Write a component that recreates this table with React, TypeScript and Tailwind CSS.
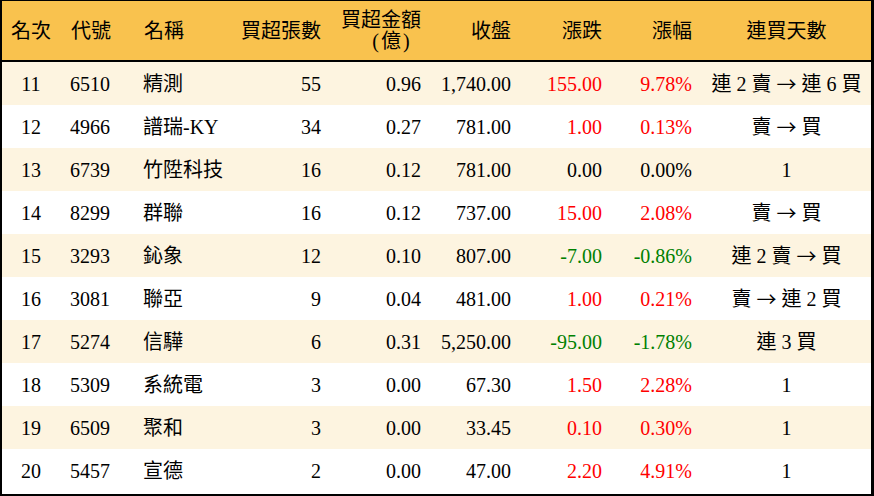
import React from "react";

type Row = {
  rank: string;
  code: string;
  name: string;
  vol: string;
  amt: string;
  close: string;
  chg: string;
  pct: string;
  days: string;
};

const rows: Row[] = [
  { rank: "11", code: "6510", name: "精測", vol: "55", amt: "0.96", close: "1,740.00", chg: "155.00", pct: "9.78%", days: "連 2 賣 → 連 6 買" },
  { rank: "12", code: "4966", name: "譜瑞-KY", vol: "34", amt: "0.27", close: "781.00", chg: "1.00", pct: "0.13%", days: "賣 → 買" },
  { rank: "13", code: "6739", name: "竹陞科技", vol: "16", amt: "0.12", close: "781.00", chg: "0.00", pct: "0.00%", days: "1" },
  { rank: "14", code: "8299", name: "群聯", vol: "16", amt: "0.12", close: "737.00", chg: "15.00", pct: "2.08%", days: "賣 → 買" },
  { rank: "15", code: "3293", name: "鈊象", vol: "12", amt: "0.10", close: "807.00", chg: "-7.00", pct: "-0.86%", days: "連 2 賣 → 買" },
  { rank: "16", code: "3081", name: "聯亞", vol: "9", amt: "0.04", close: "481.00", chg: "1.00", pct: "0.21%", days: "賣 → 連 2 買" },
  { rank: "17", code: "5274", name: "信驊", vol: "6", amt: "0.31", close: "5,250.00", chg: "-95.00", pct: "-1.78%", days: "連 3 買" },
  { rank: "18", code: "5309", name: "系統電", vol: "3", amt: "0.00", close: "67.30", chg: "1.50", pct: "2.28%", days: "1" },
  { rank: "19", code: "6509", name: "聚和", vol: "3", amt: "0.00", close: "33.45", chg: "0.10", pct: "0.30%", days: "1" },
  { rank: "20", code: "5457", name: "宣德", vol: "2", amt: "0.00", close: "47.00", chg: "2.20", pct: "4.91%", days: "1" },
];

const grid = "grid grid-cols-[58px_73px_97px_101px_100px_90px_91px_90px_169px]";

function colorOf(v: string) {
  if (v.startsWith("-")) return "text-[#008000]";
  if (parseFloat(v) > 0) return "text-[#ff0000]";
  return "text-black";
}

function Days({ text }: { text: string }) {
  const parts = text.split(" ");
  return (
    <div className="flex justify-center items-center gap-[5px]">
      {parts.map((p, i) =>
        p === "→" ? (
          <span
            key={i}
            className="inline-block w-[20px] text-center"
            style={{ fontFamily: '"Noto Sans CJK TC", sans-serif' }}
          >
            →
          </span>
        ) : (
          <span key={i}>{p}</span>
        )
      )}
    </div>
  );
}

export default function App() {
  return (
    <div
      className="w-[874px] h-[496px] bg-white border-black border-l-2 border-r-[3px] border-t border-b-2 flex flex-col text-[20px] leading-none text-black"
      style={{ fontFamily: '"Liberation Serif", "Noto Sans CJK TC", serif' }}
    >
      <div className={`${grid} h-[61px] shrink-0 bg-[#f9c24e] border-b-2 border-black items-center`}>
        <div className="text-center">名次</div>
        <div className="pl-[11px]">代號</div>
        <div className="pl-[11px]">名稱</div>
        <div className="text-right pr-[10px]">買超張數</div>
        <div className="text-right pr-[10px] leading-[21px]">
          <div>買超金額</div>
          <div className="flex justify-end">
            <span className="inline-block w-[20px] text-right pr-[2px]">(</span>
            <span className="inline-block w-[20px] text-center">億</span>
            <span className="inline-block w-[20px] text-left pl-[2px] pr-[6px]">)</span>
          </div>
        </div>
        <div className="text-right pr-[10px]">收盤</div>
        <div className="text-right pr-[10px]">漲跌</div>
        <div className="text-right pr-[10px]">漲幅</div>
        <div className="text-center">連買天數</div>
      </div>
      {rows.map((r, i) => (
        <div
          key={r.rank}
          className={`${grid} h-[43px] shrink-0 items-center ${i % 2 === 0 ? "bg-[#fdf4e0]" : "bg-white"}`}
        >
          <div className="text-center">{r.rank}</div>
          <div className="pl-[10px]">{r.code}</div>
          <div className="pl-[10px]">{r.name}</div>
          <div className="text-right pr-[10px]">{r.vol}</div>
          <div className="text-right pr-[10px]">{r.amt}</div>
          <div className="text-right pr-[10px]">{r.close}</div>
          <div className={`text-right pr-[10px] ${colorOf(r.chg)}`}>{r.chg}</div>
          <div className={`text-right pr-[10px] ${colorOf(r.pct)}`}>{r.pct}</div>
          <Days text={r.days} />
        </div>
      ))}
    </div>
  );
}
